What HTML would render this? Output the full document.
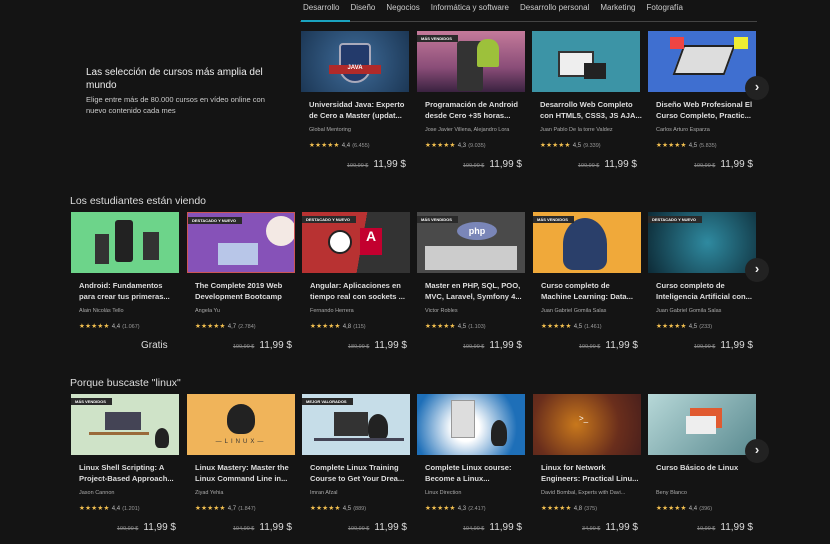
<!DOCTYPE html>
<html><head><meta charset="utf-8"><style>
*{margin:0;padding:0;box-sizing:border-box}
body{width:830px;height:540px;background:#141414;font-family:"Liberation Sans",sans-serif;position:relative;overflow:hidden;color:#ddd}
.tabs{position:absolute;left:301px;top:3px;font-size:8px;color:#ccc;white-space:nowrap}
.tabs span{margin-right:9px;margin-left:2px}
.line{position:absolute;left:300px;top:21px;width:457px;height:1px;background:#444}
.act{position:absolute;left:301px;top:20px;width:49px;height:2px;background:#1aa3bf}
.c{position:absolute;width:108px;height:150px}
.im{position:absolute;left:0;top:0;width:108px;height:61px;overflow:hidden}
.badge{position:absolute;left:0;top:4px;background:#2a2a2a;color:#fff;font-size:4px;font-weight:bold;padding:1px 6px 1px 4px}
.t{position:absolute;left:8px;top:68px;width:98px;font-size:7.6px;line-height:11px;font-weight:bold;color:#ddd;white-space:pre}
.a{position:absolute;left:8px;top:96px;font-size:5.5px;color:#aaa;white-space:nowrap}
.s{position:absolute;left:8px;top:110px;font-size:6.5px;color:#f4c150;white-space:nowrap;letter-spacing:.3px}
.s b{color:#bbb;font-weight:normal;font-size:6px;letter-spacing:0}
.s i{color:#999;font-style:normal;font-size:5.5px;letter-spacing:0}
.p{position:absolute;right:3px;top:128px;font-size:10px;color:#ddd;white-space:nowrap}
.p s{font-size:5.5px;color:#888;margin-right:5px}
.h{position:absolute;left:70px;font-size:10.5px;color:#ddd}
.nav{position:absolute;left:745px;width:24px;height:24px;border-radius:50%;background:#222;color:#eee;font-size:13px;line-height:22px;text-align:center;font-weight:bold}
</style></head><body>
<div class="tabs"><span>Desarrollo</span><span>Diseño</span><span>Negocios</span><span>Informática y software</span><span>Desarrollo personal</span><span>Marketing</span><span>Fotografía</span></div>
<div class="line"></div><div class="act"></div>
<div style="position:absolute;left:86px;top:66px;width:200px">
<div style="font-size:10px;line-height:13px;color:#eee">Las selección de cursos más amplia del mundo</div>
<div style="font-size:7.5px;line-height:11px;color:#ccc;margin-top:2px">Elige entre más de 80.000 cursos en vídeo online con nuevo contenido cada mes</div></div>

<!-- Row 1 -->
<div class="c" style="left:301px;top:31px"><div class="im" style="background:radial-gradient(circle at 50% 50%,#3f6c9a,#1c3755)"><div style="position:absolute;left:38px;top:12px;width:32px;height:40px;background:#233a6b;border:2px solid #aab;border-radius:4px 4px 16px 16px"></div><div style="position:absolute;left:28px;top:34px;width:52px;height:9px;background:#b02a2a;color:#fff;font-size:6px;font-weight:bold;text-align:center">JAVA</div></div><div class="t">Universidad Java: Experto
de Cero a Master (updat...</div><div class="a">Global Mentoring</div><div class="s">★★★★★ <b>4,4</b> <i>(6.455)</i></div><div class="p"><s>199,99 $</s>11,99 $</div></div>
<div class="c" style="left:417px;top:31px"><div class="im" style="background:linear-gradient(#c47a9a,#8a4d78 60%,#3a2240)"><div style="position:absolute;left:40px;top:10px;width:26px;height:50px;background:#333;border-radius:3px"></div><div style="position:absolute;left:60px;top:8px;width:22px;height:28px;background:#9dc13b;border-radius:10px 10px 2px 2px"></div><div class="badge">MÁS VENDIDOS</div></div><div class="t">Programación de Android
desde Cero +35 horas...</div><div class="a">Jose Javier Villena, Alejandro Lora</div><div class="s">★★★★★ <b>4,3</b> <i>(9.035)</i></div><div class="p"><s>199,99 $</s>11,99 $</div></div>
<div class="c" style="left:532px;top:31px"><div class="im" style="background:#3c94a6"><div style="position:absolute;left:26px;top:20px;width:36px;height:26px;background:#eee;border:2px solid #333"></div><div style="position:absolute;left:52px;top:32px;width:22px;height:16px;background:#222"></div></div><div class="t">Desarrollo Web Completo
con HTML5, CSS3, JS AJA...</div><div class="a">Juan Pablo De la torre Valdez</div><div class="s">★★★★★ <b>4,5</b> <i>(9.339)</i></div><div class="p"><s>199,99 $</s>11,99 $</div></div>
<div class="c" style="left:648px;top:31px"><div class="im" style="background:#3f6fd0"><div style="position:absolute;left:30px;top:14px;width:52px;height:30px;background:#ddd;transform:skew(-20deg);border:2px solid #222"></div><div style="position:absolute;left:22px;top:6px;width:14px;height:12px;background:#e44"></div><div style="position:absolute;left:86px;top:6px;width:14px;height:12px;background:#ee3"></div></div><div class="t">Diseño Web Profesional El
Curso Completo, Practic...</div><div class="a">Carlos Arturo Esparza</div><div class="s">★★★★★ <b>4,5</b> <i>(5.835)</i></div><div class="p"><s>199,99 $</s>11,99 $</div></div>
<div class="nav" style="top:76px">›</div>

<div class="h" style="top:195px">Los estudiantes están viendo</div>
<!-- Row 2 -->
<div class="c" style="left:71px;top:212px"><div class="im" style="background:#6dd48a"><div style="position:absolute;left:44px;top:8px;width:18px;height:42px;background:#222;border-radius:3px"></div><div style="position:absolute;left:24px;top:22px;width:14px;height:30px;background:#333"></div><div style="position:absolute;left:72px;top:20px;width:16px;height:28px;background:#333"></div></div><div class="t">Android: Fundamentos
para crear tus primeras...</div><div class="a">Alain Nicolás Tello</div><div class="s">★★★★★ <b>4,4</b> <i>(1.067)</i></div><div class="p">Gratis&nbsp;&nbsp;&nbsp;</div></div>
<div class="c" style="left:187px;top:212px"><div class="im" style="background:#8652b8;border:1px solid #c55"><div style="position:absolute;left:78px;top:3px;width:30px;height:30px;border-radius:50%;background:#f3e9e4"></div><div style="position:absolute;left:30px;top:30px;width:40px;height:22px;background:#b8c6e8"></div><div class="badge">DESTACADO Y NUEVO</div></div><div class="t">The Complete 2019 Web
Development Bootcamp</div><div class="a">Angela Yu</div><div class="s">★★★★★ <b>4,7</b> <i>(2.784)</i></div><div class="p"><s>199,99 $</s>11,99 $</div></div>
<div class="c" style="left:302px;top:212px"><div class="im" style="background:linear-gradient(100deg,#b83232 55%,#333 55%)"><div style="position:absolute;left:26px;top:18px;width:24px;height:24px;border-radius:50%;background:#fff;border:2px solid #222"></div><div style="position:absolute;left:58px;top:16px;width:22px;height:27px;background:#c3002f;color:#fff;font-size:14px;text-align:center;font-weight:bold">A</div><div class="badge">DESTACADO Y NUEVO</div></div><div class="t">Angular: Aplicaciones en
tiempo real con sockets ...</div><div class="a">Fernando Herrera</div><div class="s">★★★★★ <b>4,8</b> <i>(115)</i></div><div class="p"><s>189,99 $</s>11,99 $</div></div>
<div class="c" style="left:417px;top:212px"><div class="im" style="background:#4a4a4a"><div style="position:absolute;left:40px;top:10px;width:40px;height:18px;border-radius:50%;background:#7a86b8;color:#fff;font-size:9px;text-align:center;line-height:18px;font-weight:bold">php</div><div style="position:absolute;left:8px;top:34px;width:92px;height:24px;background:#ccc"></div><div class="badge">MÁS VENDIDOS</div></div><div class="t">Master en PHP, SQL, POO,
MVC, Laravel, Symfony 4...</div><div class="a">Victor Robles</div><div class="s">★★★★★ <b>4,5</b> <i>(1.103)</i></div><div class="p"><s>199,99 $</s>11,99 $</div></div>
<div class="c" style="left:533px;top:212px"><div class="im" style="background:#f0a93a"><div style="position:absolute;left:30px;top:6px;width:44px;height:52px;border-radius:50% 50% 10px 10px;background:#2a3f6a"></div><div class="badge">MÁS VENDIDOS</div></div><div class="t">Curso completo de
Machine Learning: Data...</div><div class="a">Juan Gabriel Gomila Salas</div><div class="s">★★★★★ <b>4,5</b> <i>(1.461)</i></div><div class="p"><s>199,99 $</s>11,99 $</div></div>
<div class="c" style="left:648px;top:212px"><div class="im" style="background:radial-gradient(circle at 55% 50%,#2f8aa0,#0d2a36)"><div class="badge">DESTACADO Y NUEVO</div></div><div class="t">Curso completo de
Inteligencia Artificial con...</div><div class="a">Juan Gabriel Gomila Salas</div><div class="s">★★★★★ <b>4,5</b> <i>(233)</i></div><div class="p"><s>199,99 $</s>11,99 $</div></div>
<div class="nav" style="top:258px">›</div>

<div class="h" style="top:377px">Porque buscaste "linux"</div>
<!-- Row 3 -->
<div class="c" style="left:71px;top:394px"><div class="im" style="background:#cfe3c8"><div style="position:absolute;left:18px;top:38px;width:60px;height:3px;background:#9a6a3a"></div><div style="position:absolute;left:34px;top:18px;width:36px;height:18px;background:#445"></div><div style="position:absolute;left:84px;top:34px;width:14px;height:20px;background:#222;border-radius:50% 50% 30% 30%"></div><div class="badge">MÁS VENDIDOS</div></div><div class="t">Linux Shell Scripting: A
Project-Based Approach...</div><div class="a">Jason Cannon</div><div class="s">★★★★★ <b>4,4</b> <i>(1.201)</i></div><div class="p"><s>199,99 $</s>11,99 $</div></div>
<div class="c" style="left:187px;top:394px"><div class="im" style="background:#f0b45a"><div style="position:absolute;left:40px;top:10px;width:28px;height:30px;background:#222;border-radius:50% 50% 40% 40%"></div><div style="position:absolute;left:0;top:45px;width:108px;text-align:center;font-size:6px;letter-spacing:3px;color:#333">—LINUX—</div></div><div class="t">Linux Mastery: Master the
Linux Command Line in...</div><div class="a">Ziyad Yehia</div><div class="s">★★★★★ <b>4,7</b> <i>(1.847)</i></div><div class="p"><s>194,99 $</s>11,99 $</div></div>
<div class="c" style="left:302px;top:394px"><div class="im" style="background:#c6dde8"><div style="position:absolute;left:32px;top:18px;width:34px;height:24px;background:#333"></div><div style="position:absolute;left:66px;top:20px;width:20px;height:26px;background:#222;border-radius:50% 50% 30% 30%"></div><div style="position:absolute;left:12px;top:44px;width:90px;height:3px;background:#445"></div><div class="badge">MEJOR VALORADOS</div></div><div class="t">Complete Linux Training
Course to Get Your Drea...</div><div class="a">Imran Afzal</div><div class="s">★★★★★ <b>4,5</b> <i>(889)</i></div><div class="p"><s>199,99 $</s>11,99 $</div></div>
<div class="c" style="left:417px;top:394px"><div class="im" style="background:radial-gradient(circle at 45% 55%,#fff 20%,#1e6fb8 75%)"><div style="position:absolute;left:34px;top:6px;width:24px;height:38px;background:#ddd;border:1px solid #999"></div><div style="position:absolute;left:74px;top:26px;width:16px;height:26px;background:#222;border-radius:50% 50% 30% 30%"></div></div><div class="t">Complete Linux course:
Become a Linux...</div><div class="a">Linux Direction</div><div class="s">★★★★★ <b>4,3</b> <i>(2.417)</i></div><div class="p"><s>194,99 $</s>11,99 $</div></div>
<div class="c" style="left:533px;top:394px"><div class="im" style="background:radial-gradient(circle at 40% 50%,#c8781c,#6a2e1c 60%,#4a201c)"><div style="position:absolute;left:46px;top:20px;color:#fff;font-size:8px">&gt;_</div></div><div class="t">Linux for Network
Engineers: Practical Linu...</div><div class="a">David Bombal, Experts with Davi...</div><div class="s">★★★★★ <b>4,8</b> <i>(375)</i></div><div class="p"><s>34,99 $</s>11,99 $</div></div>
<div class="c" style="left:648px;top:394px"><div class="im" style="background:linear-gradient(135deg,#b7d8d8,#5a8a90)"><div style="position:absolute;left:42px;top:14px;width:32px;height:20px;background:#e05a30"></div><div style="position:absolute;left:38px;top:22px;width:30px;height:18px;background:#eee"></div></div><div class="t">Curso Básico de Linux</div><div class="a">Beny Blanco</div><div class="s">★★★★★ <b>4,4</b> <i>(396)</i></div><div class="p"><s>19,99 $</s>11,99 $</div></div>
<div class="nav" style="top:439px">›</div>
</body></html>
